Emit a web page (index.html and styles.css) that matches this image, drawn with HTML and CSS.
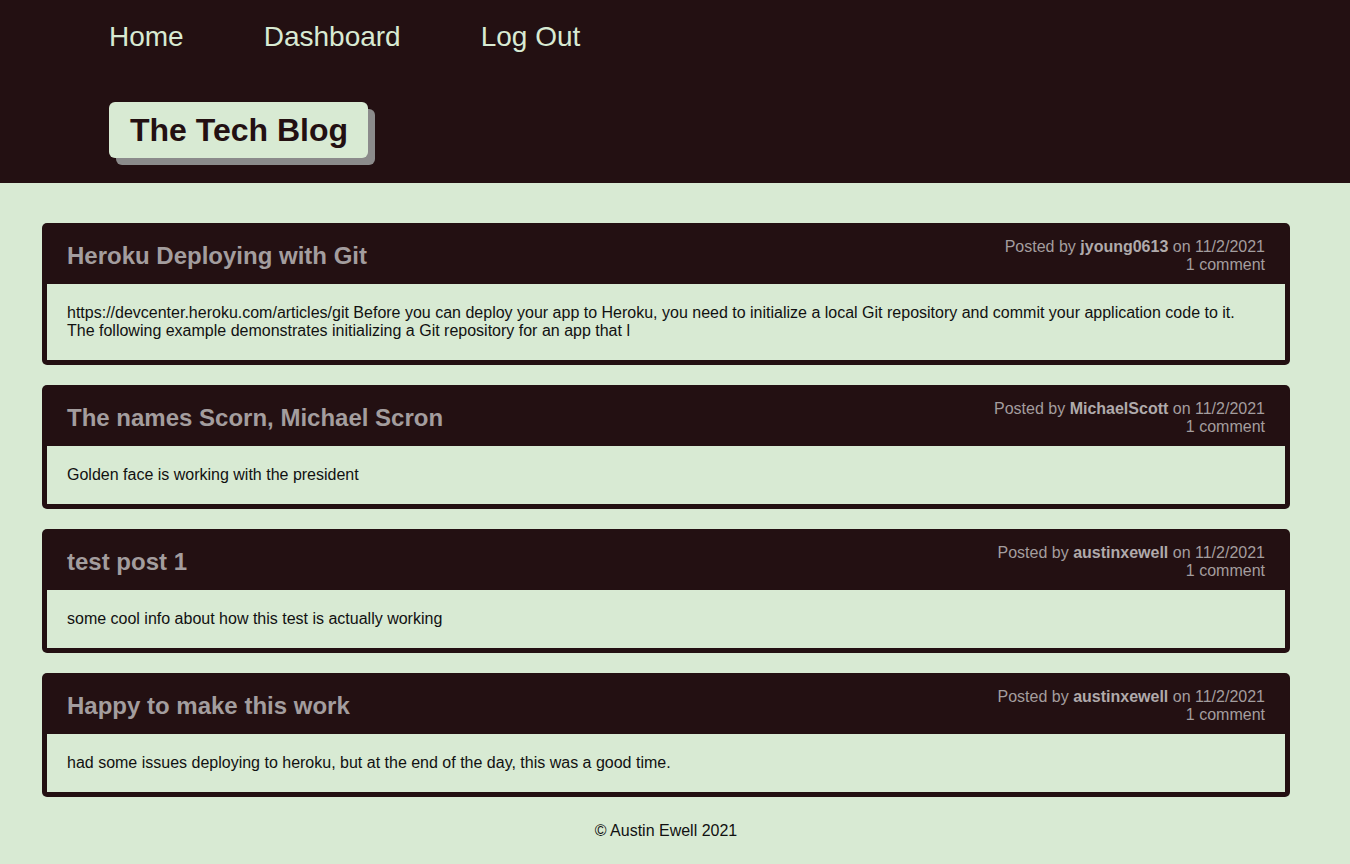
FILE: index.html
```html
<!DOCTYPE html>
<html lang="en">
<head>
<meta charset="utf-8">
<title>The Tech Blog</title>
<link rel="stylesheet" href="styles.css">
</head>
<body>
<header class="site-header">
  <nav class="nav">
    <a class="nav-link" href="#">Home</a>
    <a class="nav-link" href="#">Dashboard</a>
    <a class="nav-link" href="#">Log Out</a>
  </nav>
  <h1 class="brand">The Tech Blog</h1>
</header>
<main class="main">
  <article class="post">
    <div class="post-head">
      <h2 class="post-title">Heroku Deploying with Git</h2>
      <div class="post-meta">Posted by <b>jyoung0613</b> on 11/2/2021<br>1 comment</div>
    </div>
    <div class="post-body">https://devcenter.heroku.com/articles/git Before you can deploy your app to Heroku, you need to initialize a local Git repository and commit your application code to it. The following example demonstrates initializing a Git repository for an app that l</div>
  </article>
  <article class="post">
    <div class="post-head">
      <h2 class="post-title">The names Scorn, Michael Scron</h2>
      <div class="post-meta">Posted by <b>MichaelScott</b> on 11/2/2021<br>1 comment</div>
    </div>
    <div class="post-body">Golden face is working with the president</div>
  </article>
  <article class="post">
    <div class="post-head">
      <h2 class="post-title">test post 1</h2>
      <div class="post-meta">Posted by <b>austinxewell</b> on 11/2/2021<br>1 comment</div>
    </div>
    <div class="post-body">some cool info about how this test is actually working</div>
  </article>
  <article class="post">
    <div class="post-head">
      <h2 class="post-title">Happy to make this work</h2>
      <div class="post-meta">Posted by <b>austinxewell</b> on 11/2/2021<br>1 comment</div>
    </div>
    <div class="post-body">had some issues deploying to heroku, but at the end of the day, this was a good time.</div>
  </article>
  <footer class="footer">© Austin Ewell 2021</footer>
</main>
</body>
</html>
```

FILE: styles.css
```css
* { box-sizing: border-box; }
html, body { margin: 0; padding: 0; }
body {
  background: #d8ead3;
  font-family: "Liberation Sans", Arial, sans-serif;
  color: #111;
  min-height: 864px;
}
.site-header {
  background: #231012;
  height: 183px;
  padding: 21px 0 0 109px;
}
.nav {
  display: flex;
  gap: 80px;
  height: 32px;
  align-items: center;
}
.nav-link {
  color: #d8ead3;
  text-decoration: none;
  font-size: 28px;
  line-height: 32px;
}
.brand {
  display: inline-block;
  margin: 49px 0 0 0;
  padding: 10px 20px 10px 21px;
  background: #d8ead3;
  color: #231012;
  font-size: 32px;
  line-height: 36px;
  font-weight: bold;
  border-radius: 6px;
  box-shadow: 7px 7px 0 #8b8b8b;
}
.main {
  padding: 40px 60px 0 42px;
  display: flex;
  flex-direction: column;
  gap: 20px;
}
.post {
  background: #231012;
  border-radius: 5px;
  padding: 0 5px 5px 5px;
}
.post-head {
  display: flex;
  justify-content: space-between;
  align-items: center;
  height: 61px;
  padding: 5px 20px 0 20px;
}
.post-title {
  margin: 0;
  font-size: 24px;
  font-weight: bold;
  color: #a39d9e;
}
.post-meta {
  text-align: right;
  font-size: 16px;
  line-height: 18px;
  color: #a39d9e;
}
.post-meta b { color: #b0aaab; }
.post-body {
  background: #d8ead3;
  padding: 20px 20px;
  font-size: 16px;
  line-height: 18px;
  color: #111;
}
.footer {
  text-align: center;
  font-size: 16px;
  line-height: 18px;
  padding: 5px 0 20px;
  color: #111;
}
```
